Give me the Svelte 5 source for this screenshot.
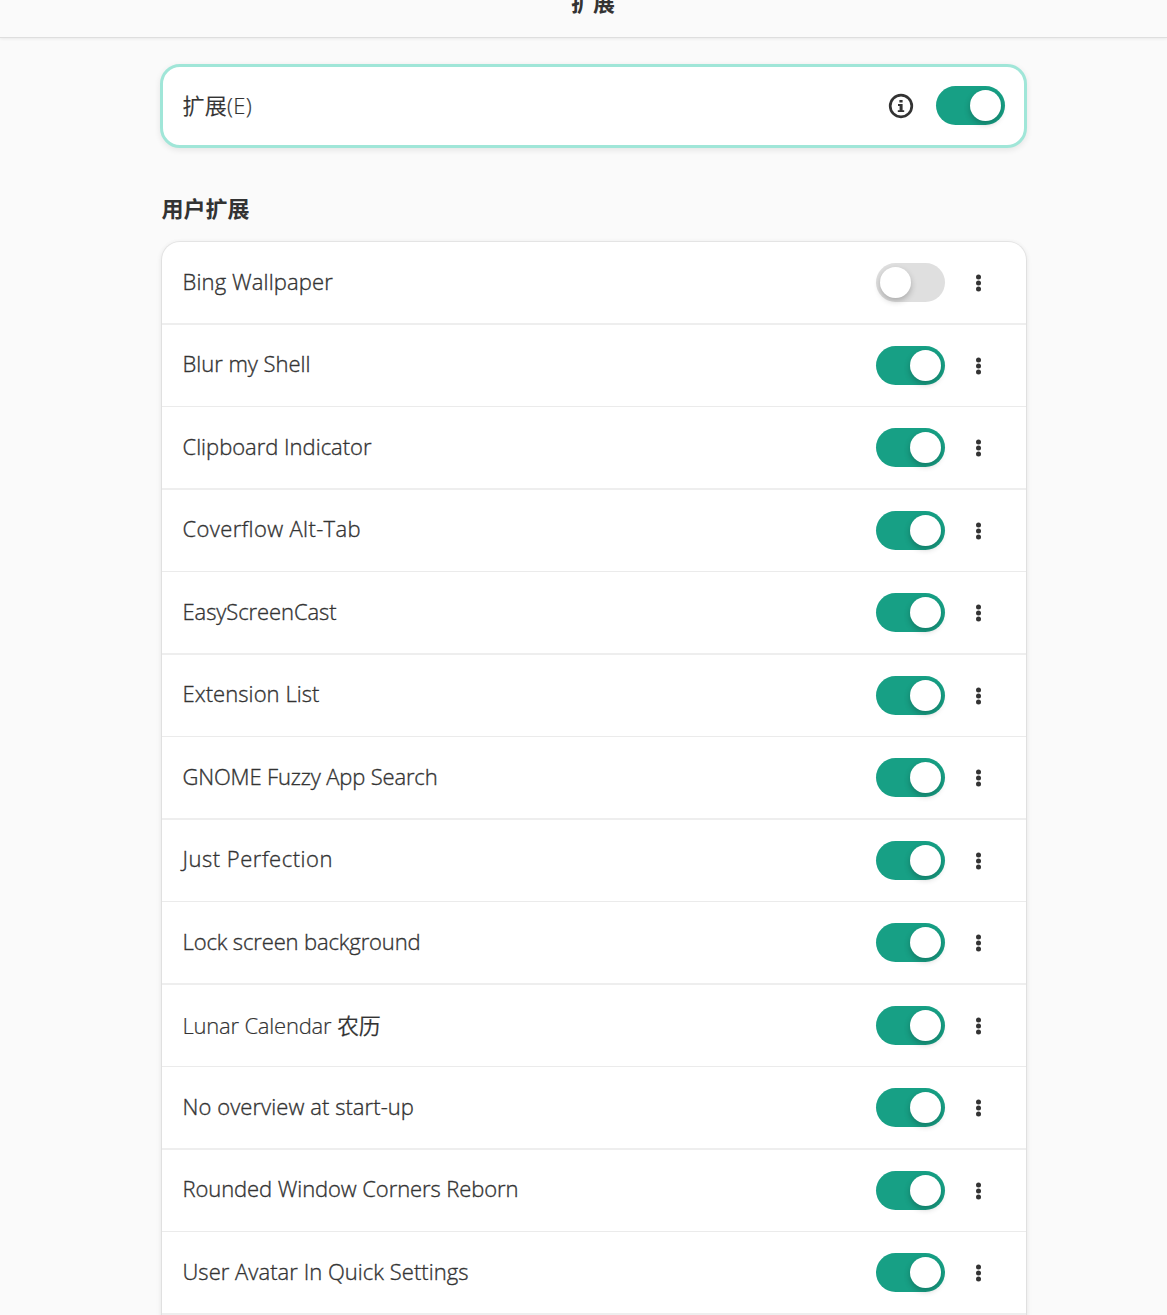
<script>
  // Label widths keep the list's text metrics steady across fonts.
  let items = $state([
    { name: 'Bing Wallpaper', on: false, width: 150.5 },
    { name: 'Blur my Shell', on: true, width: 128 },
    { name: 'Clipboard Indicator', on: true, width: 189 },
    { name: 'Coverflow Alt-Tab', on: true, width: 178.5 },
    { name: 'EasyScreenCast', on: true, width: 154 },
    { name: 'Extension List', on: true, width: 137 },
    { name: 'GNOME Fuzzy App Search', on: true, width: 255 },
    { name: 'Just Perfection', on: true, width: 150.5 },
    { name: 'Lock screen background', on: true, width: 238 },
    { name: 'Lunar Calendar 农历', on: true, width: 198, low: true },
    { name: 'No overview at start-up', on: true, width: 231.5 },
    { name: 'Rounded Window Corners Reborn', on: true, width: 336 },
    { name: 'User Avatar In Quick Settings', on: true, width: 286 }
  ]);
  let enabled = $state(true);

  // Spreads letter spacing so that a label fills its given width.
  function fit(node, width) {
    const spacing = (width - node.getBoundingClientRect().width) / node.textContent.length;
    node.style.letterSpacing = `${spacing}px`;
  }
</script>

{#snippet toggle(on, label, flip)}
  <button class="switch" class:on role="switch" aria-checked={on} aria-label={label} onclick={flip}>
    <span class="knob"></span>
  </button>
{/snippet}

<div class="window">
  <header><h1>扩展</h1></header>
  <main>
    <section class="master">
      <span class="label" use:fit={69.5}>扩展(E)</span>
      <svg class="info" viewBox="0 0 26 26" aria-hidden="true">
        <circle cx="13" cy="13" r="10.8" fill="none" stroke="#333" stroke-width="2.7" />
        <path d="M11.4 7h3.2v2.6h-3.2zM10 11.1h4.6v6.2h1.6V19h-6.4v-1.7h1.8v-4.4H10z" fill="#333" />
      </svg>
      {@render toggle(enabled, '扩展', () => (enabled = !enabled))}
    </section>

    <h2>用户扩展</h2>
    <ul>
      {#each items as item}
        <li>
          <span class="label" class:low={item.low} use:fit={item.width}>{item.name}</span>
          {@render toggle(item.on, item.name, () => (item.on = !item.on))}
          <svg class="dots" viewBox="0 0 7 18" aria-hidden="true">
            <circle cx="3.5" cy="3" r="2.5" />
            <circle cx="3.5" cy="9" r="2.5" />
            <circle cx="3.5" cy="15" r="2.5" />
          </svg>
        </li>
      {/each}
    </ul>
  </main>
</div>

<style>
  :global(body) {
    margin: 0;
    background: #fafafa;
    overflow: hidden;
  }
  .window {
    height: 1315px;
    overflow: hidden;
    background: #fafafa;
    color: #333;
    font-family: 'Open Sans', 'Noto Sans CJK SC', sans-serif;
    font-size: 22px;
  }
  header {
    display: flex;
    justify-content: center;
    align-items: flex-end;
    box-sizing: border-box;
    height: 38px;
    padding: 0 0 20px 19px;
    border-bottom: 1px solid #dedede;
    box-shadow: 0 1px 3px rgba(0, 0, 0, 0.07);
  }
  h1,
  h2 {
    margin: 0;
    font-family: 'Noto Sans CJK SC', sans-serif;
    font-size: 22px;
    font-weight: 700;
    line-height: 32px;
  }
  main {
    width: 864px;
    margin: 0 0 0 162px;
    padding-top: 26px;
  }
  .master {
    display: flex;
    align-items: center;
    box-sizing: border-box;
    width: 867px;
    height: 84px;
    margin-left: -2px;
    padding: 0 19px 1px 20px;
    border: 3px solid #a0e6d8;
    border-radius: 20px;
    background: #fff;
    box-shadow: 0 2px 6px rgba(0, 0, 0, 0.09);
  }
  h2 {
    margin: 43px 0 19px -0.5px;
  }
  ul {
    margin: 0;
    padding: 0 0 20px;
    list-style: none;
    border-radius: 18px;
    background: #fff;
    box-shadow:
      0 0 0 1px rgba(0, 0, 0, 0.05),
      0 1px 4px 1px rgba(0, 0, 0, 0.07),
      0 2px 8px 2px rgba(0, 0, 0, 0.02);
  }
  li {
    display: flex;
    align-items: center;
    box-sizing: border-box;
    height: 83px;
    padding: 0 44px 0 21px;
    border-bottom: 2px solid #eee;
  }
  li:nth-child(even) {
    height: 82px;
    border-bottom: 1px solid #ebebeb;
  }
  .label {
    margin-right: auto;
    margin-left: -0.5px;
    padding-bottom: 4px;
    font-weight: 360;
    line-height: 30px;
    white-space: nowrap;
    -webkit-text-stroke: 0.35px #333;
  }
  li:nth-child(even) .label {
    padding-bottom: 5px;
  }
  li:nth-child(even) .label.low,
  .master .label {
    padding: 0 0 1px;
    -webkit-text-stroke-width: 0.2px;
  }
  .info {
    width: 26px;
    height: 26px;
    margin-right: 22px;
  }
  .switch {
    display: flex;
    justify-content: flex-start;
    align-items: center;
    box-sizing: border-box;
    width: 69px;
    height: 39px;
    padding: 0 4px;
    border: 0;
    border-radius: 20px;
    background: #dfdfdf;
  }
  .switch.on {
    justify-content: flex-end;
    background: #17a085;
  }
  .knob {
    width: 31px;
    height: 31px;
    border-radius: 50%;
    background: #fff;
    box-shadow: 0 3px 6px rgba(0, 0, 0, 0.24);
  }
  .dots {
    width: 7px;
    height: 18px;
    margin: 1px 0 0 30px;
    fill: #333;
  }
</style>
